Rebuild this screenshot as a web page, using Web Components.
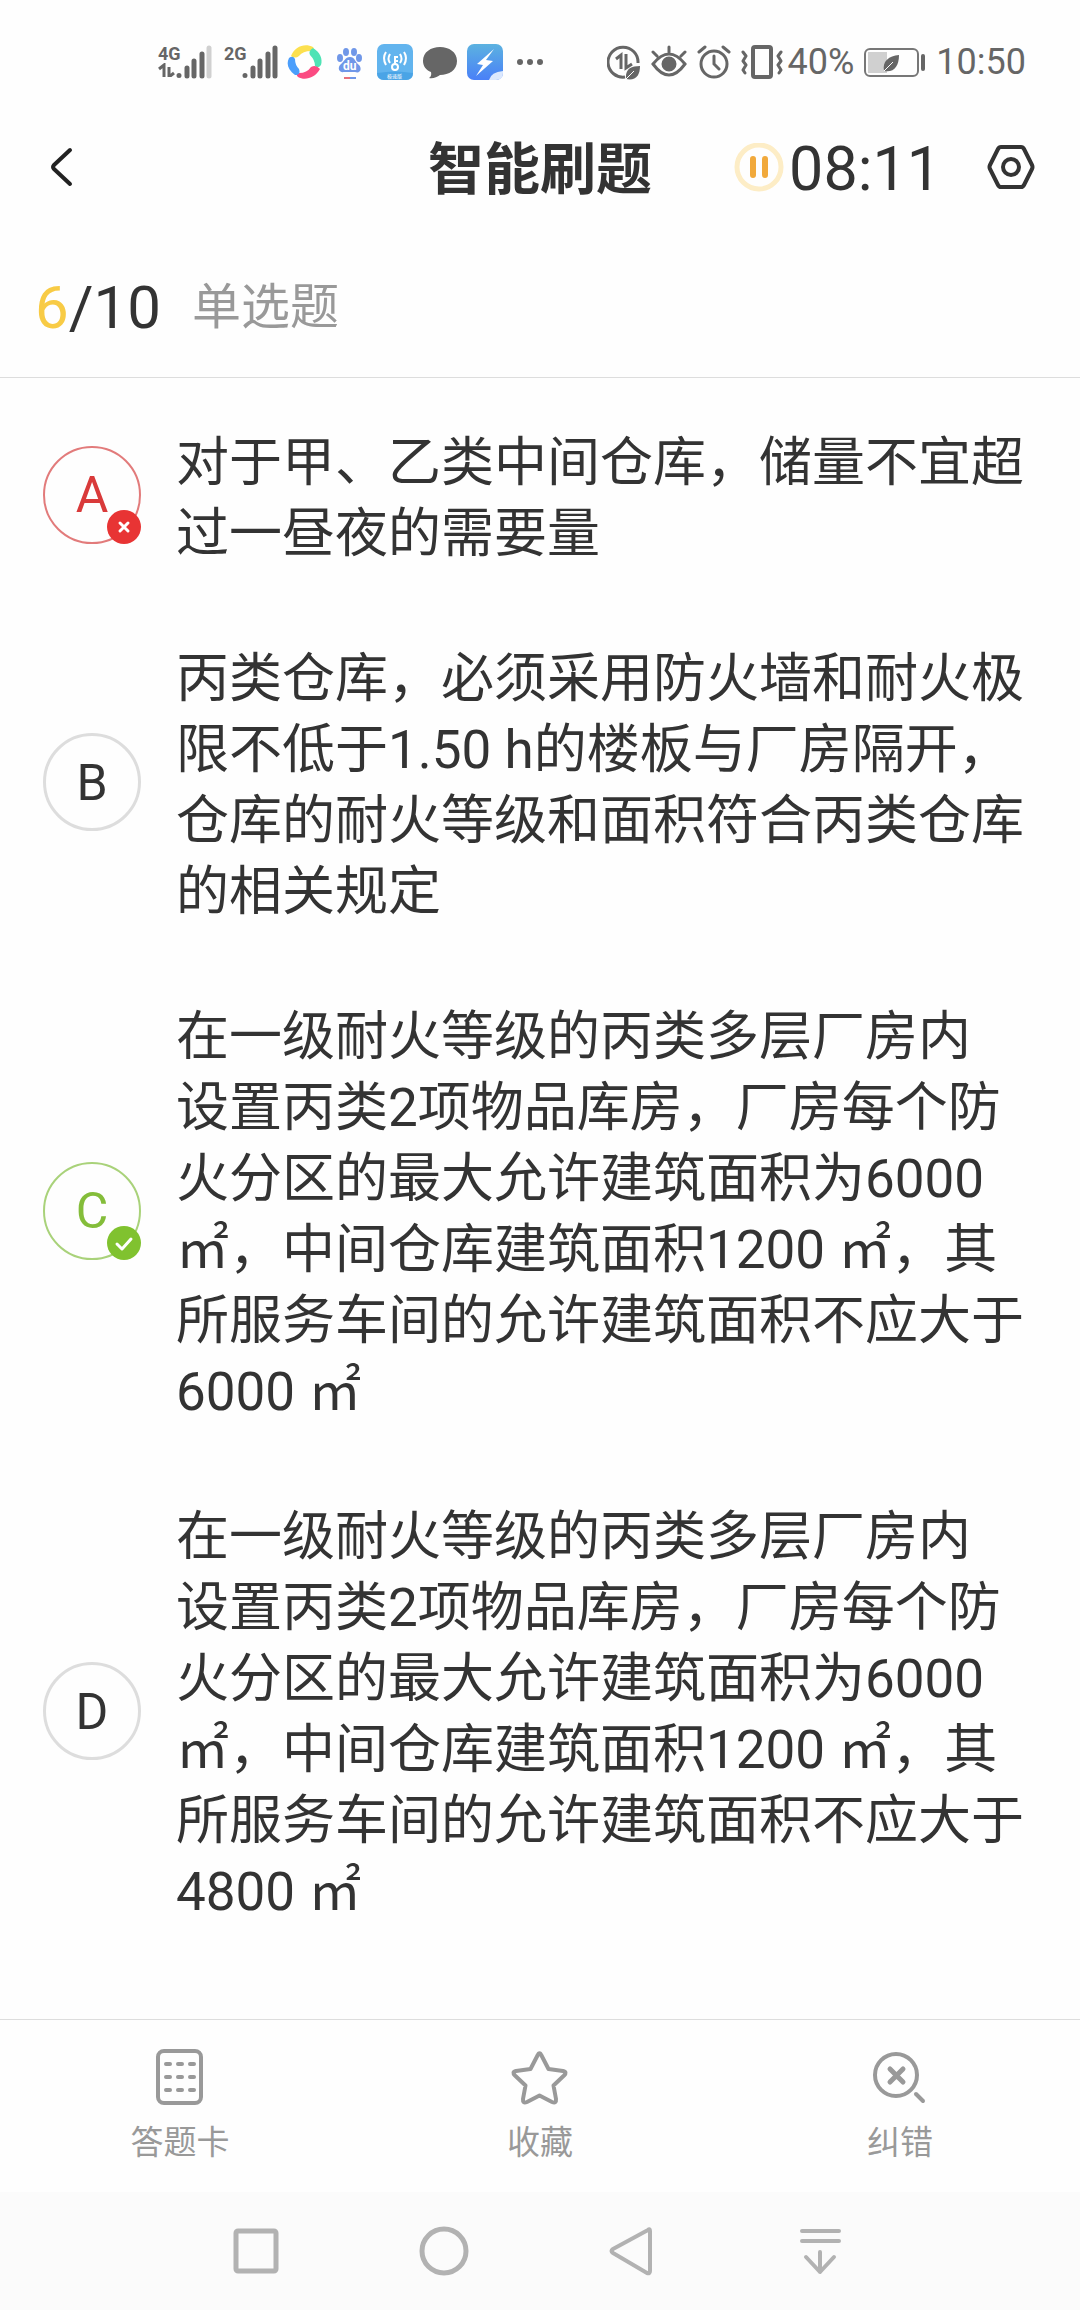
<!DOCTYPE html>
<html lang="zh-CN">
<head>
<meta charset="utf-8">
<meta name="viewport" content="width=device-width, initial-scale=1">
<title>智能刷题</title>
<style>
    body {
        margin: 0;
        min-height: 100vh;
        display: flex;
        flex-direction: column;
        background: #fefefe;
        color: #333;
        font-family: Roboto, "Noto Sans CJK SC", sans-serif;
    }

    main {
        flex: 1;
        padding: 11px 0 0;
    }

    footer {
        display: grid;
        grid-template-columns: repeat(3, 1fr);
        border-top: 1px solid #ddd;
    }
</style>
</head>
<body>
    <status-bar></status-bar>
    <quiz-header time="08:11">智能刷题</quiz-header>
    <quiz-progress current="6" total="10">单选题</quiz-progress>

    <main>
        <answer-option letter="A" state="wrong">对于甲、乙类中间仓库，储量不宜超过一昼夜的需要量</answer-option>
        <answer-option letter="B">丙类仓库，必须采用防火墙和耐火极限不低于1.50 h的楼板与厂房隔开，仓库的耐火等级和面积符合丙类仓库的相关规定</answer-option>
        <answer-option letter="C" state="right">在一级耐火等级的丙类多层厂房内<br>设置丙类2项物品库房，厂房每个防火分区的最大允许建筑面积为6000 ㎡，中间仓库建筑面积1200 ㎡，其所服务车间的允许建筑面积不应大于6000 ㎡</answer-option>
        <answer-option letter="D">在一级耐火等级的丙类多层厂房内<br>设置丙类2项物品库房，厂房每个防火分区的最大允许建筑面积为6000 ㎡，中间仓库建筑面积1200 ㎡，其所服务车间的允许建筑面积不应大于4800 ㎡</answer-option>
    </main>

    <footer>
        <tool-button>
            <svg slot="icon" width="60" height="60" viewBox="0 0 60 60" fill="none" stroke="#999" stroke-width="4" stroke-linecap="round">
                <rect x="8" y="4" width="43" height="52" rx="6"/>
                <path d="M16 17h4M28 17h4M40 17h4M16 30h4M28 30h4M40 30h4M16 43h4M28 43h4M40 43h4"/>
            </svg>
            答题卡
        </tool-button>
        <tool-button>
            <svg slot="icon" width="60" height="60" viewBox="0 0 60 60" fill="none" stroke="#999" stroke-width="4" stroke-linejoin="round">
                <path d="M27.500 8.500Q29.500 4 31.500 8.500L38.500 22L53 24Q57.500 25 54 28.500L43.500 38.500L46 52Q46.500 57 42 55L29.500 48.500L17 55Q12.500 57 13 52L15.500 38.500L5 28.500Q1.500 25 6 24L20.500 22Z"/>
            </svg>
            收藏
        </tool-button>
        <tool-button>
            <svg slot="icon" width="60" height="60" viewBox="0 0 60 60" fill="none" stroke="#999" stroke-width="4" stroke-linecap="round">
                <circle cx="26" cy="28" r="21"/>
                <path d="M20 22l13 13M33 22l-13 13" stroke-width="5"/>
                <path d="M46 47l7 7"/>
            </svg>
            纠错
        </tool-button>
    </footer>

    <system-nav></system-nav>

<script>
    // 顶部系统状态栏
    class StatusBar extends HTMLElement {
        constructor() {
            super();
            this.attachShadow({mode: "open"});
            this.shadowRoot.innerHTML = `
                <style>
                    :host {
                        display: flex;
                        justify-content: space-between;
                        align-items: center;
                        height: 44px;
                        padding: 40px 54px 0 158px;
                        color: #666;
                        font-size: 36px;
                        line-height: 44px;
                        white-space: nowrap;
                    }

                    div {
                        display: flex;
                        align-items: center;
                    }

                    svg {
                        display: block;
                        flex: none;
                    }

                    .apps {
                        gap: 9px;
                    }

                    .system {
                        gap: 10px;
                    }

                    .signal {
                        align-items: flex-start;
                    }

                    .signal:first-child {
                        margin-right: 3px;
                    }

                    .network {
                        flex-direction: column;
                        align-items: flex-start;
                        width: 18px;
                        font-size: 18px;
                        font-weight: 700;
                        line-height: 18px;
                    }

                    .level {
                        gap: 5px;
                    }
                </style>

                <div class="apps">
                    <div class="signal">
                        <div class="network">
                            4G
                            <svg width="18" height="14" viewBox="0 0 18 14" fill="none" stroke="#666" stroke-width="3">
                                <path d="M1 6l5-4v12M11 4v10l5-4"/>
                            </svg>
                        </div>
                        <svg width="36" height="34" viewBox="0 0 36 34" stroke="#666" stroke-width="5" stroke-linecap="round">
                            <path d="M3 30.500v0M11 23v8M18 16v15M26 9v22"/>
                            <path d="M33 3v28" stroke="#d0d0d0"/>
                        </svg>
                    </div>
                    <div class="signal">
                        <div class="network">2G</div>
                        <svg width="36" height="34" viewBox="0 0 36 34" stroke="#666" stroke-width="5" stroke-linecap="round">
                            <path d="M3 30.500v0M11 23v8M18 16v15M26 9v22M33 3v28"/>
                        </svg>
                    </div>
                    <svg width="36" height="36" viewBox="0 0 36 36">
                        <path d="M4 12C8 2 18-1 26 3Q28 5 24 7Q16 7 12 12Q8 15 4 12Z" fill="#fce04f"/>
                        <path d="M26 4C33 8 36 15 34 21Q31 25 28 22Q28 16 23 11Q21 7 26 4Z" fill="#4fe3b5"/>
                        <path d="M33 25C28 34 18 37 11 33Q8 30 12 29Q20 29 24 23Q29 20 33 25Z" fill="#fb4b82"/>
                        <path d="M8 31C1 26-1 20 2 14Q6 11 8 15Q8 21 12 25Q14 31 8 31Z" fill="#4b9efb"/>
                    </svg>
                    <svg width="36" height="36" viewBox="0 0 36 36" fill="#7097e8">
                        <ellipse cx="14" cy="8" rx="3" ry="4"/>
                        <ellipse cx="22" cy="8" rx="3" ry="4"/>
                        <ellipse cx="8" cy="14" rx="3" ry="4"/>
                        <ellipse cx="27" cy="14" rx="3" ry="4"/>
                        <path d="M18 13C13 13 12 18 8 21C5 25 8 29 12 28H23C29 30 30 24 27 21C23 18 23 13 18 13Z"/>
                        <text x="11" y="26" fill="#fff" font-family="Roboto" font-size="12" font-weight="700">du</text>
                        <path d="M12 33h6v2h-6z" fill="#e8707a"/>
                        <path d="M18 33h6v2h-6z"/>
                    </svg>
                    <svg width="36" height="36" viewBox="0 0 36 36" fill="none" stroke="#fff" stroke-width="2">
                        <rect width="36" height="36" rx="7" fill="#62b4ee" stroke="none"/>
                        <path d="M0 29Q18 26 36 29Q36 36 29 36H7Q0 36 0 29Z" fill="#4aa4e6" stroke="none"/>
                        <circle cx="18" cy="23" r="3"/>
                        <path d="M18 20v-8M18 13h3M18 17h3M13 10q-3 5 0 9M9 8q-4 6 0 13M23 10q3 5 0 9M27 8q4 6 0 13"/>
                        <text x="10" y="34" fill="#fff" stroke="none" font-family="Noto Sans CJK SC" font-size="5">极速版</text>
                    </svg>
                    <svg width="36" height="36" viewBox="0 0 36 36" fill="#666">
                        <path d="M18 3C27 3 35 8 35 17C35 26 27 31 18 31C15 33 11 35 7 34Q10 32 9 28C4 26 1 22 1 17C1 8 9 3 18 3Z"/>
                    </svg>
                    <svg width="36" height="36" viewBox="0 0 36 36">
                        <linearGradient id="sky" x2="0" y2="1">
                            <stop stop-color="#5cb2e0"/>
                            <stop offset="1" stop-color="#4a80f8"/>
                        </linearGradient>
                        <rect width="36" height="36" rx="7" fill="url(#sky)"/>
                        <path d="M27 5L10 20L16 21L9 32L26 17L19 16Z" fill="#fff"/>
                        <path d="M22 36Q24 28 36 27V29Q36 36 29 36Z" fill="#dce8fd"/>
                    </svg>
                    <svg width="36" height="36" viewBox="0 0 36 36" fill="#666">
                        <circle cx="8" cy="18" r="3"/>
                        <circle cx="18" cy="18" r="3"/>
                        <circle cx="28" cy="18" r="3"/>
                    </svg>
                </div>

                <div class="system">
                    <svg width="34" height="36" viewBox="0 0 34 36" fill="none" stroke="#666" stroke-width="3">
                        <path d="M31 19A15 15 0 1 0 18 33"/>
                        <path d="M9 15l5-4v14M19 10v14l6-4"/>
                        <path d="M19 35C18 25 24 22 33 22C33 31 29 37 19 35Z" fill="#666" stroke="none"/>
                        <path d="M19 35l8-8" stroke="#fefefe" stroke-width="1"/>
                    </svg>
                    <svg width="36" height="36" viewBox="0 0 36 36" fill="none" stroke="#666" stroke-width="3" stroke-linecap="round">
                        <path d="M2 20Q18 0 34 20Q18 42 2 20ZM18 8V3M6 12L2 8M30 12l4-4"/>
                        <circle cx="18" cy="20" r="6" fill="#666"/>
                    </svg>
                    <svg width="34" height="36" viewBox="0 0 34 36" fill="none" stroke="#666" stroke-width="3" stroke-linecap="round">
                        <circle cx="17" cy="20" r="13"/>
                        <path d="M17 12v8l5 5M2 8l6-5M32 8l-6-5"/>
                    </svg>
                    <div class="level">
                        <svg width="42" height="36" viewBox="0 0 42 36" fill="none" stroke="#666" stroke-width="4" stroke-linecap="round" stroke-linejoin="round">
                            <rect x="12" y="3" width="18" height="30" rx="2"/>
                            <path d="M2 8l3 4-3 5 3 4-3 5 2 3M40 8l-3 4 3 5-3 4 3 5-2 3" stroke-width="3"/>
                        </svg>
                        <span>40%</span>
                    </div>
                    <svg width="62" height="36" viewBox="0 0 62 36">
                        <rect x="1" y="5" width="53" height="27" rx="5" fill="none" stroke="#777" stroke-width="2"/>
                        <path d="M4 8h19v21H4z" fill="#d0d0d0"/>
                        <path d="M20 27C18 17 25 12 35 11C35 22 30 29 20 27Z" fill="#666"/>
                        <path d="M20 27l9-9" stroke="#fefefe"/>
                        <path d="M59 12v13" stroke="#666" stroke-width="4" stroke-linecap="round"/>
                    </svg>
                    <span>10:50</span>
                </div>
            `;
        }
    }

    // 标题栏：返回、标题、计时、设置
    class QuizHeader extends HTMLElement {
        constructor() {
            super();
            this.attachShadow({mode: "open"});
            this.shadowRoot.innerHTML = `
                <style>
                    :host {
                        display: grid;
                        grid-template-columns: 1fr auto 1fr;
                        align-items: center;
                        height: 168px;
                        padding: 0 45px;
                    }

                    h1 {
                        margin: 0;
                        padding-top: 4px;
                        font-size: 56px;
                        line-height: 64px;
                        font-weight: 700;
                    }

                    button {
                        display: block;
                        padding: 0;
                        border: 0;
                        background: none;
                        cursor: pointer;
                    }

                    svg {
                        display: block;
                    }

                    .tools {
                        display: flex;
                        align-items: center;
                        justify-content: flex-end;
                    }

                    time {
                        margin: 0 46px 0 5px;
                        padding-top: 2px;
                        font-size: 61px;
                        line-height: 64px;
                    }
                </style>

                <button class="back" aria-label="返回">
                    <svg width="34" height="48" viewBox="0 0 34 48" fill="none" stroke="#222" stroke-width="4" stroke-linecap="round" stroke-linejoin="round">
                        <path d="M25 6L9 21Q7 23 9 25L25 40"/>
                    </svg>
                </button>
                <h1><slot></slot></h1>
                <div class="tools">
                    <button aria-label="暂停">
                        <svg width="50" height="50" viewBox="0 0 50 50" fill="none">
                            <circle cx="25" cy="24" r="22" stroke="#fdedc6" stroke-width="5"/>
                            <path d="M19 16v16M31 16v16" stroke="#f1a93b" stroke-width="6" stroke-linecap="round"/>
                        </svg>
                    </button>
                    <time></time>
                    <button aria-label="设置">
                        <svg width="48" height="48" viewBox="0 0 48 48" fill="none" stroke="#333" stroke-width="4" stroke-linejoin="round">
                            <path d="M14 3H34Q36 3 37 5L45 21Q46 23 45 25L37 41Q36 43 34 43H14Q12 43 11 41L3 25Q2 23 3 21L11 5Q12 3 14 3Z"/>
                            <circle cx="24" cy="23" r="8"/>
                        </svg>
                    </button>
                </div>
            `;
        }

        connectedCallback() {
            this.shadowRoot.querySelector('time').textContent = this.getAttribute('time');
        }
    }

    // 答题进度与题型
    class QuizProgress extends HTMLElement {
        constructor() {
            super();
            this.attachShadow({mode: "open"});
            this.shadowRoot.innerHTML = `
                <style>
                    :host {
                        display: flex;
                        align-items: center;
                        gap: 31px;
                        height: 112px;
                        padding: 0 35px 13px;
                        border-bottom: 1px solid #ddd;
                        font-size: 60px;
                        line-height: 72px;
                    }

                    .current {
                        color: #f8cb45;
                    }

                    .type {
                        color: #999;
                        font-size: 49px;
                    }
                </style>

                <div><span class="current"></span><span class="total"></span></div>
                <div class="type"><slot></slot></div>
            `;
        }

        connectedCallback() {
            this.shadowRoot.querySelector('.current').textContent = this.getAttribute('current');
            this.shadowRoot.querySelector('.total').textContent = '/' + this.getAttribute('total');
        }
    }

    // 选项，state 为 wrong 或 right 时显示角标
    class AnswerOption extends HTMLElement {
        constructor() {
            super();
            this.attachShadow({mode: "open"});
            this.shadowRoot.innerHTML = `
                <style>
                    :host {
                        display: block;
                        --ring: #ddd;
                        --mark: #333;
                    }

                    :host([state="wrong"]) {
                        --ring: #e27b7b;
                        --mark: #d93a3a;
                    }

                    :host([state="right"]) {
                        --ring: #a9d27a;
                        --mark: #84bd3a;
                    }

                    button {
                        display: flex;
                        align-items: center;
                        gap: 35px;
                        width: 100%;
                        padding: 39px 48px 35px 43px;
                        border: 0;
                        background: none;
                        color: inherit;
                        font: inherit;
                        font-size: 53px;
                        line-height: 71px;
                        text-align: left;
                        cursor: pointer;
                    }

                    .letter {
                        position: relative;
                        flex: none;
                        box-sizing: border-box;
                        width: 98px;
                        height: 98px;
                        margin-bottom: 8px;
                        border: 3px solid var(--ring);
                        border-radius: 50%;
                        color: var(--mark);
                        font-size: 50px;
                        line-height: 94px;
                        text-align: center;
                    }

                    :host([state]) .letter {
                        border-width: 2px;
                    }

                    .badge {
                        display: none;
                        position: absolute;
                        right: -2px;
                        bottom: -2px;
                    }

                    :host([state="wrong"]) .badge.wrong,
                    :host([state="right"]) .badge.right {
                        display: block;
                    }

                    .text {
                        flex: 1;
                    }
                </style>

                <button>
                    <span class="letter">
                        <span class="mark"></span>
                        <svg class="badge wrong" width="34" height="34" viewBox="0 0 34 34">
                            <circle cx="17" cy="17" r="17" fill="#e83434"/>
                            <path d="M13 13l8 8M21 13l-8 8" stroke="#fff" stroke-width="3" stroke-linecap="round"/>
                        </svg>
                        <svg class="badge right" width="34" height="34" viewBox="0 0 34 34">
                            <circle cx="17" cy="17" r="17" fill="#80c22f"/>
                            <path d="M10 18l5 5 9-10" fill="none" stroke="#fff" stroke-width="3" stroke-linecap="round" stroke-linejoin="round"/>
                        </svg>
                    </span>
                    <span class="text"><slot></slot></span>
                </button>
            `;
        }

        connectedCallback() {
            this.shadowRoot.querySelector('.mark').textContent = this.getAttribute('letter');
        }
    }

    // 底部工具按钮
    class ToolButton extends HTMLElement {
        constructor() {
            super();
            this.attachShadow({mode: "open"});
            this.shadowRoot.innerHTML = `
                <style>
                    :host {
                        display: block;
                    }

                    button {
                        display: flex;
                        flex-direction: column;
                        align-items: center;
                        gap: 14px;
                        width: 100%;
                        padding: 27px 0;
                        border: 0;
                        background: none;
                        color: #999;
                        font: inherit;
                        font-size: 33px;
                        line-height: 44px;
                        cursor: pointer;
                    }

                    ::slotted(svg) {
                        display: block;
                    }
                </style>

                <button>
                    <slot name="icon"></slot>
                    <span><slot></slot></span>
                </button>
            `;
        }
    }

    // 系统导航键
    class SystemNav extends HTMLElement {
        constructor() {
            super();
            this.attachShadow({mode: "open"});
            this.shadowRoot.innerHTML = `
                <style>
                    :host {
                        display: grid;
                        grid-template-columns: repeat(4, 1fr);
                        align-items: center;
                        height: 118px;
                        padding: 0 166px 0 162px;
                        background: #fbfbfb;
                    }

                    button {
                        display: flex;
                        justify-content: center;
                        padding: 0;
                        border: 0;
                        background: none;
                        cursor: pointer;
                    }

                    svg {
                        fill: none;
                        stroke: #b2b2b2;
                        stroke-width: 5;
                        stroke-linejoin: round;
                    }
                </style>

                <button aria-label="最近任务">
                    <svg width="54" height="54" viewBox="0 0 54 54"><rect x="7" y="7" width="40" height="40" rx="2"/></svg>
                </button>
                <button aria-label="主屏幕">
                    <svg width="54" height="54" viewBox="0 0 54 54"><circle cx="27" cy="27" r="22"/></svg>
                </button>
                <button aria-label="后退">
                    <svg width="54" height="54" viewBox="0 0 54 54"><path d="M43 6Q45 4 45 7V47Q45 50 42 49L8 29Q5 27 8 25Z" stroke-width="4"/></svg>
                </button>
                <button aria-label="下拉通知">
                    <svg width="54" height="54" viewBox="0 0 54 54" stroke-linecap="round"><path d="M9 7h37M9 17h37M27 28v20M13 33l14 15 14-15" stroke-width="4"/></svg>
                </button>
            `;
        }
    }

    customElements.define('status-bar', StatusBar);
    customElements.define('quiz-header', QuizHeader);
    customElements.define('quiz-progress', QuizProgress);
    customElements.define('answer-option', AnswerOption);
    customElements.define('tool-button', ToolButton);
    customElements.define('system-nav', SystemNav);
</script>
</body>
</html>
